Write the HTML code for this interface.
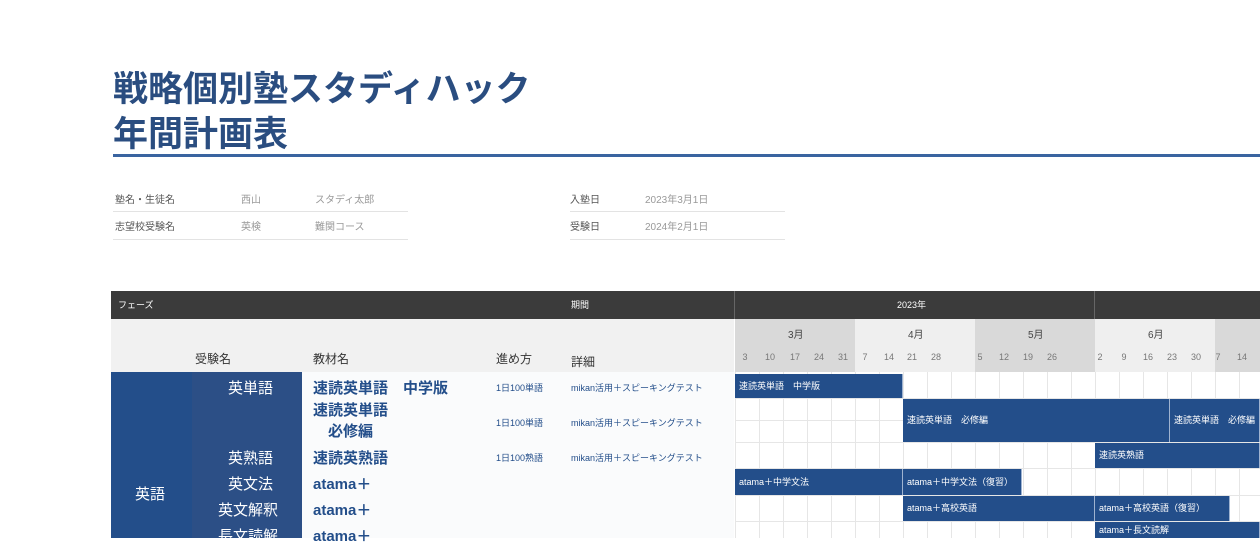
<!DOCTYPE html><html><head><meta charset="utf-8"><style>
body{margin:0;width:1260px;height:538px;overflow:hidden;background:#fff;font-family:"Liberation Sans","Noto Sans CJK JP",sans-serif;position:relative}
div{position:absolute;box-sizing:border-box}
.t{white-space:nowrap}
.s{font-size:10px;color:#555}
.bar{background:#234e8a;color:#fff;font-size:9px;line-height:1;padding:0 4px;display:flex;align-items:center;white-space:nowrap;border-right:1px solid #9fb3d0}
.m{font-size:15px;font-weight:bold;color:#234e8a}
.w{color:#fff;font-size:15px}
.d{font-size:9px;color:#234e8a}
.dy{top:352px;font-size:9px;color:#777;width:20px;text-align:center}
.hl{left:735px;width:525px;height:1px;background:#e6e6e6}
</style></head><body>
<div class="t" style="left:113px;top:67px;font-size:35px;font-weight:bold;color:#2a4d80;line-height:45px">戦略個別塾スタディハック<br>年間計画表</div>
<div style="left:113px;top:154px;width:1147px;height:3px;background:#3a64a0"></div>

<div class="t s" style="left:115px;top:191px">塾名・生徒名</div>
<div class="t s" style="left:241px;top:191px;color:#999">西山</div>
<div class="t s" style="left:315px;top:191px;color:#999">スタディ太郎</div>
<div style="left:113px;top:211px;width:295px;height:1px;background:#e3e3e3"></div>
<div class="t s" style="left:115px;top:218px">志望校受験名</div>
<div class="t s" style="left:241px;top:218px;color:#999">英検</div>
<div class="t s" style="left:315px;top:218px;color:#999">難関コース</div>
<div style="left:113px;top:239px;width:295px;height:1px;background:#e3e3e3"></div>
<div class="t s" style="left:570px;top:191px">入塾日</div>
<div class="t s" style="left:645px;top:191px;color:#999">2023年3月1日</div>
<div style="left:570px;top:211px;width:215px;height:1px;background:#e3e3e3"></div>
<div class="t s" style="left:570px;top:218px">受験日</div>
<div class="t s" style="left:645px;top:218px;color:#999">2024年2月1日</div>
<div style="left:570px;top:239px;width:215px;height:1px;background:#e3e3e3"></div>

<div style="left:111px;top:291px;width:1149px;height:28px;background:#3b3b3b"></div>
<div style="left:734px;top:291px;width:1px;height:28px;background:#666"></div>
<div style="left:1094px;top:291px;width:1px;height:28px;background:#666"></div>
<div class="t" style="left:118px;top:298px;font-size:9px;color:#fff">フェーズ</div>
<div class="t" style="left:571px;top:298px;font-size:9px;color:#fff">期間</div>
<div class="t" style="left:897px;top:298px;font-size:9px;color:#fff">2023年</div>

<div style="left:111px;top:319px;width:623px;height:53px;background:#f1f1f1"></div>
<div class="t" style="left:195px;top:350px;font-size:12px;color:#333">受験名</div>
<div class="t" style="left:313px;top:350px;font-size:12px;color:#333">教材名</div>
<div class="t" style="left:496px;top:350px;font-size:12px;color:#333">進め方</div>
<div class="t" style="left:571px;top:353px;font-size:12px;color:#333">詳細</div>

<div style="left:735px;top:319px;width:120px;height:53px;background:#d9d9d9"></div>
<div style="left:855px;top:319px;width:120px;height:53px;background:#efefef"></div>
<div style="left:975px;top:319px;width:120px;height:53px;background:#d9d9d9"></div>
<div style="left:1095px;top:319px;width:120px;height:53px;background:#efefef"></div>
<div style="left:1215px;top:319px;width:45px;height:53px;background:#d9d9d9"></div>
<div class="t" style="left:788px;top:326px;font-size:10px;color:#444">3月</div>
<div class="t" style="left:908px;top:326px;font-size:10px;color:#444">4月</div>
<div class="t" style="left:1028px;top:326px;font-size:10px;color:#444">5月</div>
<div class="t" style="left:1148px;top:326px;font-size:10px;color:#444">6月</div>
<div class="dy" style="left:735px">3</div><div class="dy" style="left:760px">10</div><div class="dy" style="left:785px">17</div><div class="dy" style="left:809px">24</div><div class="dy" style="left:833px">31</div>
<div class="dy" style="left:855px">7</div><div class="dy" style="left:879px">14</div><div class="dy" style="left:902px">21</div><div class="dy" style="left:926px">28</div>
<div class="dy" style="left:970px">5</div><div class="dy" style="left:994px">12</div><div class="dy" style="left:1018px">19</div><div class="dy" style="left:1042px">26</div>
<div class="dy" style="left:1090px">2</div><div class="dy" style="left:1114px">9</div><div class="dy" style="left:1138px">16</div><div class="dy" style="left:1162px">23</div><div class="dy" style="left:1186px">30</div>
<div class="dy" style="left:1208px">7</div><div class="dy" style="left:1232px">14</div>

<!-- grid -->
<div style="left:735px;top:372px;width:525px;height:166px;background-image:linear-gradient(90deg,#e6e6e6 1px,transparent 1px);background-size:24px 26px"></div>
<div class="hl" style="top:398px"></div><div class="hl" style="top:420px"></div><div class="hl" style="top:442px"></div><div class="hl" style="top:468px"></div><div class="hl" style="top:495px"></div><div class="hl" style="top:521px"></div>
<div style="left:302px;top:372px;width:432px;height:166px;background:#fafbfc"></div>

<div style="left:111px;top:372px;width:81px;height:166px;background:#234e8a"></div>
<div style="left:192px;top:372px;width:110px;height:166px;background:#2c4f86"></div>
<div class="t w" style="left:135px;top:483px">英語</div>
<div class="t w" style="left:228px;top:377px">英単語</div>
<div class="t w" style="left:228px;top:447px">英熟語</div>
<div class="t w" style="left:228px;top:473px">英文法</div>
<div class="t w" style="left:218px;top:499px">英文解釈</div>
<div class="t w" style="left:218px;top:525px">長文読解</div>

<div class="t m" style="left:313px;top:377px">速読英単語　中学版</div>
<div class="t m" style="left:313px;top:400px;text-align:center;line-height:21px">速読英単語<br>必修編</div>
<div class="t m" style="left:313px;top:447px">速読英熟語</div>
<div class="t m" style="left:313px;top:473px">atama＋</div>
<div class="t m" style="left:313px;top:499px">atama＋</div>
<div class="t m" style="left:313px;top:525px">atama＋</div>
<div class="t d" style="left:496px;top:381px">1日100単語</div>
<div class="t d" style="left:496px;top:416px">1日100単語</div>
<div class="t d" style="left:496px;top:451px">1日100熟語</div>
<div class="t d" style="left:571px;top:381px">mikan活用＋スピーキングテスト</div>
<div class="t d" style="left:571px;top:416px">mikan活用＋スピーキングテスト</div>
<div class="t d" style="left:571px;top:451px">mikan活用＋スピーキングテスト</div>

<div class="bar" style="left:735px;top:374px;width:168px;height:24px">速読英単語　中学版</div>
<div class="bar" style="left:903px;top:399px;width:267px;height:43px">速読英単語　必修編</div>
<div class="bar" style="left:1170px;top:399px;width:90px;height:43px">速読英単語　必修編</div>
<div class="bar" style="left:1095px;top:443px;width:165px;height:25px">速読英熟語</div>
<div class="bar" style="left:735px;top:469px;width:168px;height:26px">atama＋中学文法</div>
<div class="bar" style="left:903px;top:469px;width:119px;height:26px">atama＋中学文法（復習）</div>
<div class="bar" style="left:903px;top:496px;width:192px;height:25px">atama＋高校英語</div>
<div class="bar" style="left:1095px;top:496px;width:135px;height:25px">atama＋高校英語（復習）</div>
<div class="bar" style="left:1095px;top:522px;width:165px;height:16px">atama＋長文読解</div>
</body></html>
